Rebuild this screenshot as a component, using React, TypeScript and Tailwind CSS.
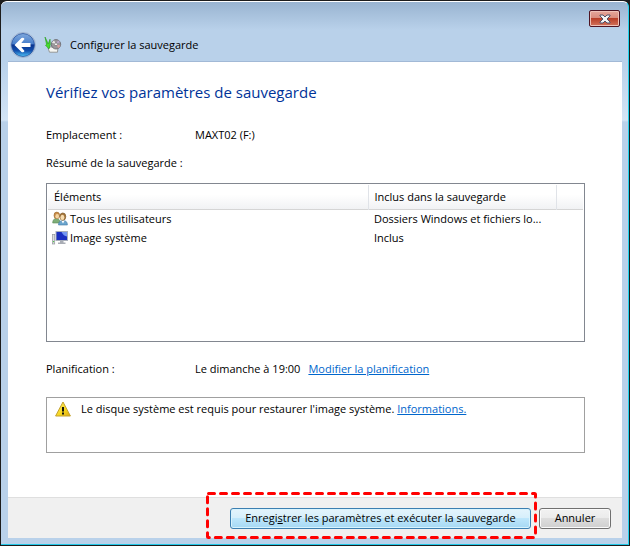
function BackButton() {
  return (
    <button type="button" aria-label="Précédent" className="size-[26px] shrink-0">
      <svg viewBox="0 0 26 26" className="size-full">
        <defs>
          <linearGradient id="orb" x1="0" y1="0" x2="0" y2="1">
            <stop offset="0" stopColor="#7fa8dc" />
            <stop offset="0.44" stopColor="#4a80cc" />
            <stop offset="0.5" stopColor="#0a3590" />
            <stop offset="0.75" stopColor="#1250ae" />
            <stop offset="1" stopColor="#4fc3f7" />
          </linearGradient>
        </defs>
        <circle cx="13" cy="13" r="12.5" fill="#e6eef8" stroke="#8ea6c6" strokeWidth="0.8" />
        <circle cx="13" cy="13" r="11.5" fill="url(#orb)" stroke="#27529c" strokeWidth="0.8" />
        <path d="M4.5 13 L11.5 6 Q13.5 5 14.5 7 L11.3 11 H20.5 V15 H11.3 L14.5 19 Q13.5 21 11.5 20 Z" fill="#fff" />
      </svg>
    </button>
  );
}

function BackupIcon() {
  return (
    <svg viewBox="0 0 18 18" className="size-[18px] shrink-0">
      <path d="M4 12 L6.5 11 H14 L13.5 16.2 H5.5 Z" fill="#f6f6f2" stroke="#8c8f8c" strokeWidth="0.9" />
      <circle cx="12" cy="8.3" r="4.7" fill="#9b979b" stroke="#66636a" strokeWidth="0.8" />
      <path d="M12 8.3 L7.8 6.5 L10 4.2 Z" fill="#e6e6e6" />
      <path d="M12 8.3 L16.5 9.5 L14.5 12.2 Z" fill="#db9d9d" />
      <path d="M12 8.3 L14 4.2 L16 6 Z" fill="#b9a6cc" />
      <circle cx="12" cy="8.3" r="1.4" fill="#fff" stroke="#666" strokeWidth="0.6" />
      <path d="M1 1 L3.2 5.5 L4.2 8 L6 3.2 L6.3 8.5 L5 13 L1.5 9.2 L2.6 8.6 Z" fill="#45dc2d" stroke="#219b18" strokeWidth="0.6" />
    </svg>
  );
}

function UsersIcon() {
  return (
    <svg viewBox="0 0 16 16" className="size-4 shrink-0">
      <path d="M0.7 12 Q0.7 7.5 4.5 7.5 Q8 7.5 8 12 Z" fill="#7fae78" stroke="#5b8a55" strokeWidth="0.6" />
      <ellipse cx="4.8" cy="4.4" rx="2.8" ry="3.3" fill="#c98d4a" stroke="#96652a" strokeWidth="0.6" />
      <ellipse cx="5.2" cy="5.2" rx="1.8" ry="2.3" fill="#f3d4a2" />
      <path d="M6.5 14 Q6.5 9.5 11 9.5 Q15.4 9.5 15.4 14 Z" fill="#6ba5ce" stroke="#3f78a5" strokeWidth="0.6" />
      <path d="M9.3 9.5 L11 12.5 L12.7 9.5 Z" fill="#fff" />
      <ellipse cx="10.8" cy="5.6" rx="3" ry="3.7" fill="#a5763c" stroke="#76501e" strokeWidth="0.6" />
      <ellipse cx="10.4" cy="6.4" rx="2" ry="2.6" fill="#f6dcb0" />
    </svg>
  );
}

function ComputerIcon() {
  return (
    <svg viewBox="0 0 16 16" className="size-4 shrink-0">
      <rect x="0.5" y="4.5" width="2.2" height="9.5" fill="#dcdee1" stroke="#94989d" strokeWidth="0.7" />
      <rect x="1.1" y="11" width="1" height="1.2" fill="#4bc83a" />
      <rect x="4" y="1.5" width="11.5" height="9" fill="#1a2fc0" stroke="#a9afbb" />
      <path d="M9.5 2 H15 V6.5 Q11.5 6 9.5 2 Z" fill="#7396f2" />
      <path d="M8 11 H11.5 V12.5 H13.5 V14 H6 V12.5 H8 Z" fill="#a9adb5" />
    </svg>
  );
}

function WarningIcon() {
  return (
    <svg viewBox="0 0 16 16" className="size-4 shrink-0">
      <defs>
        <linearGradient id="warn" x1="0" y1="0" x2="1" y2="1">
          <stop offset="0" stopColor="#fff27a" />
          <stop offset="0.6" stopColor="#f7d61c" />
          <stop offset="1" stopColor="#d9a514" />
        </linearGradient>
      </defs>
      <path d="M8 1 L15.4 15 H0.6 Z" fill="url(#warn)" stroke="#c3a02c" strokeLinejoin="round" />
      <path d="M7 6 H9 V10.5 H7 Z M7 11.5 H9 V13.5 H7 Z" fill="#111" />
    </svg>
  );
}

const items = [
  { name: "Tous les utilisateurs", included: "Dossiers Windows et fichiers lo...", Icon: UsersIcon },
  { name: "Image système", included: "Inclus", Icon: ComputerIcon },
];

export default function App() {
  return (
    <div className="flex min-h-screen flex-col bg-[#1c1c1c] font-['Open_Sans','Noto_Sans',sans-serif] text-[11px] leading-4 text-black">
      <main className="m-px flex flex-1 flex-col rounded-t-md border-t border-r border-b border-t-white border-r-[#22d3ee] border-b-[#22c8e8] bg-[#b9d1ea] bg-[linear-gradient(to_bottom,#99b4d1_0px,#b9d1ea_28px,#b9d1ea_60px,#d3e4f5_118px,#b9d1ea_120px)] pr-1.5 pb-1.5 pl-[7px]">
        <header className="flex h-[59px] items-start justify-between">
          <div className="flex items-center gap-2 pt-[30px] pl-0.5">
            <BackButton />
            <BackupIcon />
            <h1>Configurer la sauvegarde</h1>
          </div>
          <button
            type="button"
            aria-label="Fermer"
            className="mt-2 mr-0.5 flex h-[17px] w-[31px] items-center justify-center rounded-[2px] border border-[#4f1422] bg-[linear-gradient(to_bottom,#e6a79b_0%,#d98b7c_48%,#b93f28_50%,#d2735c_100%)] shadow-[inset_0_0_0_1px_#efc1b7]"
          >
            <svg viewBox="0 0 12 10" className="h-2.5 w-3">
              <path d="M1 1 H4 L6 3 L8 1 H11 V2 L8 5 L11 8 V9 H8 L6 7 L4 9 H1 V8 L4 5 L1 2 Z" fill="#f4f4f4" stroke="#50536b" />
            </svg>
          </button>
        </header>

        <section className="flex-1 border-t border-[#a2b9d6] bg-white pt-[18px] pr-[37px] pl-[38px]">
          <h2 className="text-[15px] leading-6 text-[#003399]">Vérifiez vos paramètres de sauvegarde</h2>
          <div className="mt-[23px] flex">
            <span className="w-[149px]">Emplacement :</span>
            <span>MAXT02 (F:)</span>
          </div>
          <p className="mt-3">Résumé de la sauvegarde :</p>

          <div className="mt-3 h-[159px] border border-[#828790] p-px">
            <table className="w-full table-fixed border-collapse text-left">
              <thead className="bg-[linear-gradient(to_bottom,#fff_40%,#f1f2f4_100%)]">
                <tr className="h-6 border-b border-[#d5d5d5]">
                  <th className="border-r border-[#e0e3e8] px-1.5 font-normal">Éléments</th>
                  <th className="w-[188px] border-r border-[#e0e3e8] px-1.5 font-normal">Inclus dans la sauvegarde</th>
                  <td className="w-[27px]" />
                </tr>
              </thead>
              <tbody>
                {items.map(({ name, included, Icon }) => (
                  <tr key={name} className="h-[19px]">
                    <td className="pl-1">
                      <span className="flex items-center gap-0.5">
                        <Icon />
                        {name}
                      </span>
                    </td>
                    <td className="truncate px-1.5">{included}</td>
                    <td />
                  </tr>
                ))}
              </tbody>
            </table>
          </div>

          <div className="mt-[19px] flex">
            <span className="w-[149px]">Planification :</span>
            <span>Le dimanche à 19:00</span>
            <a href="#planification" className="ml-2 text-[#0066cc] underline">Modifier la planification</a>
          </div>

          <div className="mt-5 flex h-14 gap-2.5 border border-[#a0a0a0] px-2 py-[3px]">
            <WarningIcon />
            <p>
              Le disque système est requis pour restaurer l'image système.{" "}
              <a href="#informations" className="text-[#0066cc] underline">Informations.</a>
            </p>
          </div>
        </section>

        <footer className="flex h-[41px] items-center justify-end gap-2 border-t border-[#dfdfdf] bg-[#f0f0f0] pr-[11px]">
          <div className="relative">
            <button
              type="button"
              className="block h-[21px] w-[301px] rounded-[3px] border border-[#3c7fb1] bg-[linear-gradient(to_bottom,#e4f4fc_0%,#d6effb_48%,#bde6fb_50%,#a6d9f4_100%)] whitespace-nowrap shadow-[inset_0_0_0_1px_#d8f3fd]"
            >
              Enregi<u>s</u>trer les paramètres et exécuter la sauvegarde
            </button>
            <svg className="pointer-events-none absolute -top-4 -left-6 h-[47px] w-[332px]">
              <rect x="1.5" y="1.5" width="328" height="44" rx="1" fill="none" stroke="#ff0000" strokeWidth="3" strokeLinecap="round" strokeDasharray="6 6" />
            </svg>
          </div>
          <button
            type="button"
            className="block h-[21px] w-[72px] rounded-[3px] border border-[#707070] bg-[linear-gradient(to_bottom,#f2f2f2_0%,#ebebeb_48%,#dddddd_50%,#cfcfcf_100%)] shadow-[inset_0_0_0_1px_#fafafa]"
          >
            Annuler
          </button>
        </footer>
      </main>
    </div>
  );
}
